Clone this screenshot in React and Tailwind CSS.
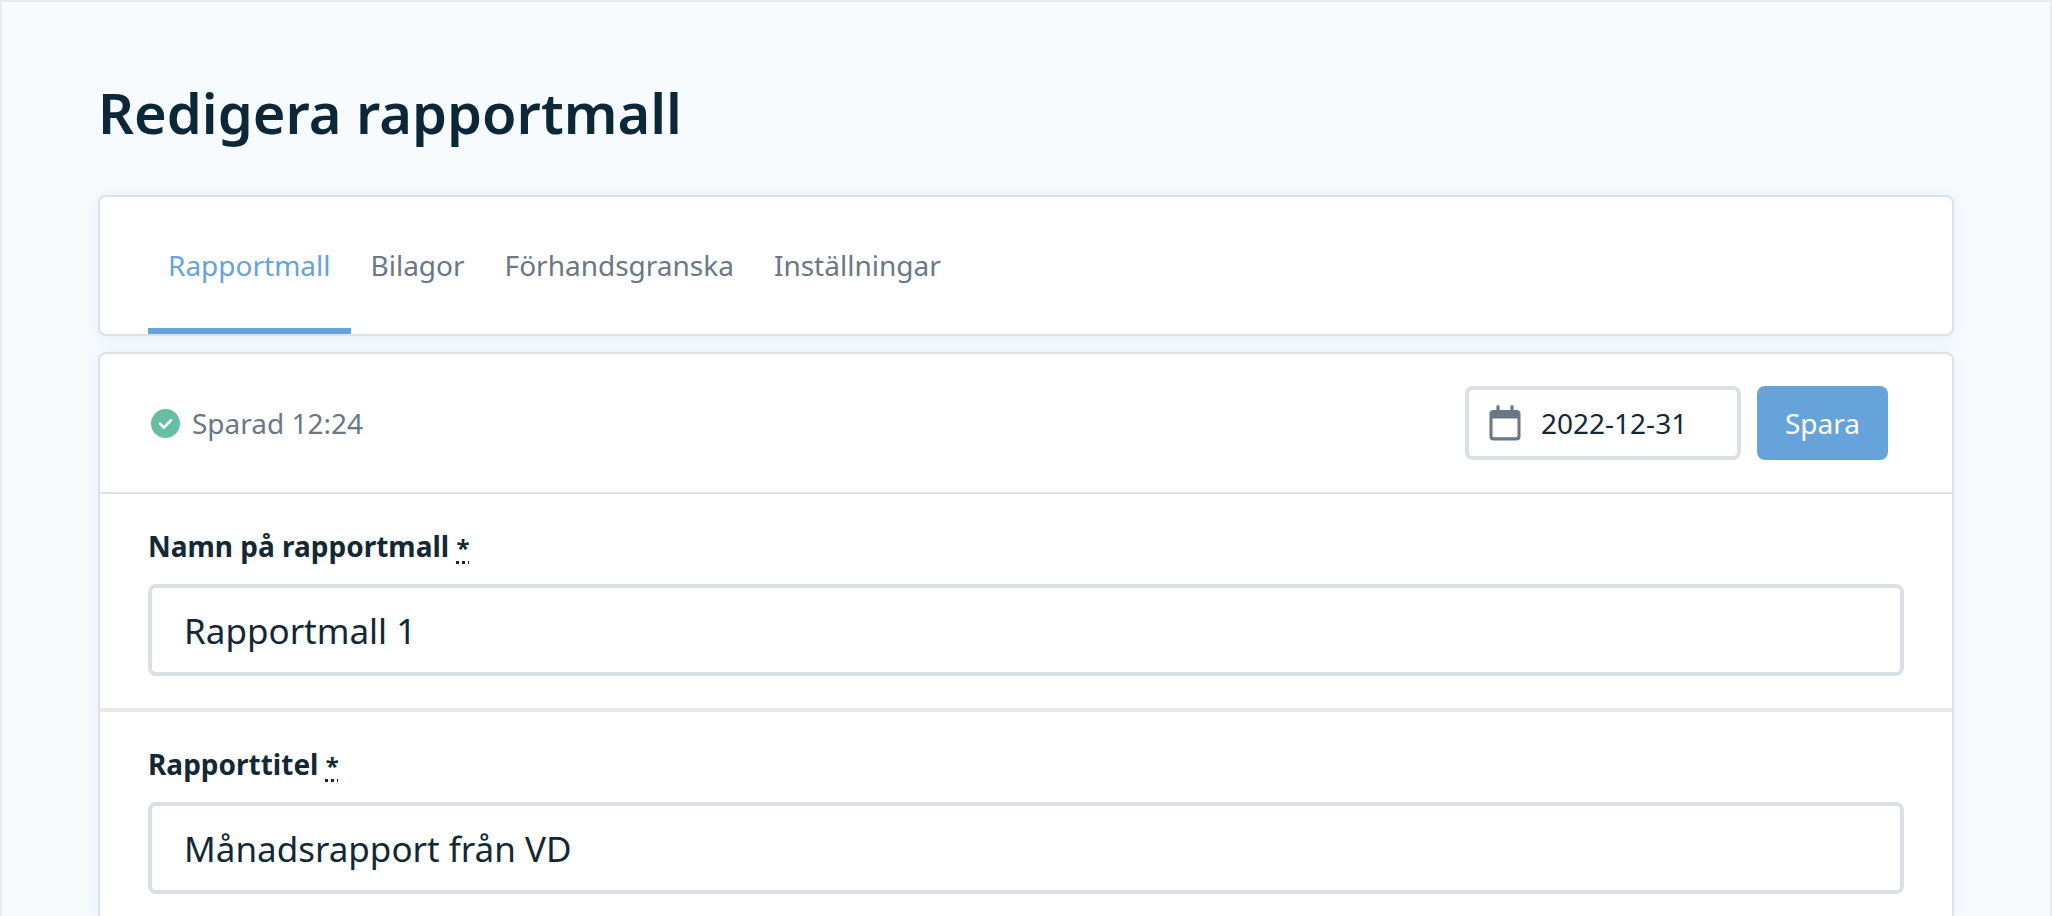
import React, { useState } from "react";

const tabs = ["Rapportmall", "Bilagor", "Förhandsgranska", "Inställningar"];

const CheckIcon = () => (
  <svg viewBox="0 0 29 29" className="w-[29px] h-[29px]" aria-hidden="true">
    <circle cx="14.5" cy="14.5" r="14.5" fill="#66bfa5" />
    <path
      d="M9 14.6l3.9 3.9 7-7.2"
      fill="none"
      stroke="#fff"
      strokeWidth="2.6"
      strokeLinecap="round"
      strokeLinejoin="round"
    />
  </svg>
);

const CalendarIcon = () => (
  <svg viewBox="0 0 32 36" className="w-8 h-9 shrink-0" aria-hidden="true">
    <path
      fill="#6a7786"
      fillRule="evenodd"
      d="M9 0a1.6 1.6 0 0 1 1.6 1.6V5h10.8V1.6a1.6 1.6 0 0 1 3.2 0V5H27.5a4 4 0 0 1 4 4v22.5a4 4 0 0 1-4 4h-23a4 4 0 0 1-4-4V9a4 4 0 0 1 4-4h2.9V1.6A1.6 1.6 0 0 1 9 0zM3.5 13.5v17.2a1.6 1.6 0 0 0 1.6 1.6h21.8a1.6 1.6 0 0 0 1.6-1.6V13.5z"
    />
  </svg>
);

const Field = ({ id, label, defaultValue }) => (
  <div className="px-12 pt-8">
    <label htmlFor={id} className="block text-[28px] leading-10 font-bold">
      {label}{" "}
      <span className="text-2xl underline decoration-dotted decoration-3 underline-offset-4">*</span>
    </label>
    <input
      id={id}
      type="text"
      defaultValue={defaultValue}
      className="mt-[18px] block w-full h-[92px] px-8 text-[35px] border-4 border-[#d9e0e6] rounded-lg bg-white outline-none focus:border-[#65a3da]"
    />
  </div>
);

const App = () => {
  const [active, setActive] = useState("Rapportmall");

  return (
    <div className="min-h-screen flex flex-col bg-[#f8fbfe] border-t-2 border-x-2 border-[#e9ecef] px-24 pt-19 font-['Noto_Sans',sans-serif] text-[#132836]">
      <h1 className="text-[56px] leading-[68px] font-semibold text-[#0c2838]">Redigera rapportmall</h1>

      {/* Tabs */}
      <nav className="mt-[49px] flex h-[141px] px-12 bg-white border-2 border-[#dde2e7] rounded-lg shadow-[0_2px_16px_#e3edf8]">
        {tabs.map((tab) => (
          <button
            key={tab}
            type="button"
            onClick={() => setActive(tab)}
            className={
              tab === active
                ? "px-5 pt-1 text-[28px] border-b-6 border-[#65a3da] text-[#65a3da]"
                : "px-5 pt-1 text-[28px] border-b-6 border-transparent text-[#6a7786]"
            }
          >
            {tab}
          </button>
        ))}
      </nav>

      {/* Editor */}
      <main className="mt-4 flex-1 bg-white border-2 border-b-0 border-[#dde2e7] rounded-t-lg shadow-[0_2px_16px_#e3edf8]">
        <div className="flex items-center justify-between h-[140px] pl-[51px] pr-16 border-b-2 border-[#dde2e7]">
          <div className="flex items-center gap-3 text-[28px] text-[#6a7786]">
            <CheckIcon />
            <span>Sparad 12:24</span>
          </div>
          <div className="flex gap-4">
            <label className="flex items-center gap-5 w-[276px] h-[74px] px-5 border-4 border-[#d9e0e6] rounded-lg">
              <CalendarIcon />
              <input
                type="text"
                aria-label="Datum"
                defaultValue="2022-12-31"
                className="w-full min-w-0 text-[28px] outline-none"
              />
            </label>
            <button type="button" className="w-[131px] h-[74px] rounded-lg bg-[#65a3da] text-[28px] text-white">
              Spara
            </button>
          </div>
        </div>

        <Field id="name" label="Namn på rapportmall" defaultValue="Rapportmall 1" />
        <hr className="mt-8 border-t-4 border-[#e9e9e9]" />
        <Field id="title" label="Rapporttitel" defaultValue="Månadsrapport från VD" />
      </main>
    </div>
  );
};

export default App;
